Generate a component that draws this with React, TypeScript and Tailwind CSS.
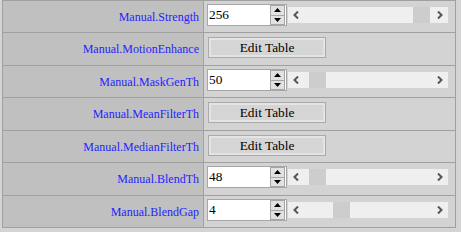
import React from "react";

type Row =
  | { label: string; kind: "num"; value: string; thumb: number }
  | { label: string; kind: "btn" };

const rows: Row[] = [
  { label: "Manual.Strength", kind: "num", value: "256", thumb: 125 },
  { label: "Manual.MotionEnhance", kind: "btn" },
  { label: "Manual.MaskGenTh", kind: "num", value: "50", thumb: 21 },
  { label: "Manual.MeanFilterTh", kind: "btn" },
  { label: "Manual.MedianFilterTh", kind: "btn" },
  { label: "Manual.BlendTh", kind: "num", value: "48", thumb: 21 },
  { label: "Manual.BlendGap", kind: "num", value: "4", thumb: 45 },
];

const heights = ["h-[31px]", "h-[32px]", "h-[31px]", "h-[32px]", "h-[31px]", "h-[32px]", "h-[31px]"];

function Spinner() {
  return (
    <div className="w-[15px] h-[20px] border border-[#a6a6a6] bg-[#e1e1e1] flex flex-col mr-px">
      <div className="flex-1 flex items-center justify-center border-b border-[#a6a6a6]">
        <svg width="7" height="4" viewBox="0 0 7 4">
          <path d="M3.5 0 L7 4 L0 4 Z" fill="#000" />
        </svg>
      </div>
      <div className="flex-1 flex items-center justify-center">
        <svg width="7" height="4" viewBox="0 0 7 4">
          <path d="M0 0 L7 0 L3.5 4 Z" fill="#000" />
        </svg>
      </div>
    </div>
  );
}

function ScrollBar({ thumb }: { thumb: number }) {
  return (
    <div className="relative w-[160px] h-[16px] bg-[#efefef] ml-px">
      <svg className="absolute left-[5px] top-[4px]" width="6" height="8" viewBox="0 0 6 8">
        <path d="M5 0.5 L1.5 4 L5 7.5" stroke="#555" strokeWidth="2" fill="none" />
      </svg>
      <div className="absolute top-0 h-[16px] w-[17px] bg-[#cdcdcd]" style={{ left: thumb }} />
      <svg className="absolute left-[149px] top-[4px]" width="6" height="8" viewBox="0 0 6 8">
        <path d="M1 0.5 L4.5 4 L1 7.5" stroke="#555" strokeWidth="2" fill="none" />
      </svg>
    </div>
  );
}

export default function App() {
  return (
    <div className="w-[461px] h-[232px] bg-[#d4d4d4] pl-[2px] font-['Liberation_Serif','Tinos','DejaVu_Serif',serif]">
      <div className="w-[454px] border border-[#a0a0a0] bg-[#a0a0a0] flex flex-col gap-px">
        {rows.map((r, i) => (
          <div key={r.label} className={`flex gap-px ${heights[i]}`}>
            <div className="w-[200px] bg-[#c0c0c0] flex items-center justify-end pr-[4px] text-[12px] text-[#1f1fff] leading-[14px]">
              <span>{r.label}</span>
            </div>
            <div className="flex-1 bg-[#d3d3d3]">
              {r.kind === "num" ? (
                <div className="flex items-center pl-[3px] pt-[3px]">
                  <div className="w-[80px] h-[22px] border border-[#a6a6a6] bg-white flex items-center">
                    <div className="flex-1 pl-px text-[13.333px] text-black leading-[16px]">{r.value}</div>
                    <Spinner />
                  </div>
                  <ScrollBar thumb={r.thumb} />
                </div>
              ) : (
                <div className="pl-[4px] pt-[4px]">
                  <div className="w-[118px] h-[21px] border border-[#aaaaaa] bg-[#e4e4e4] p-[2px]">
                    <div className="w-full h-full bg-[#d5d5d5] flex items-center justify-center text-[13.333px] text-black leading-[15px]">
                      Edit Table
                    </div>
                  </div>
                </div>
              )}
            </div>
          </div>
        ))}
      </div>
    </div>
  );
}
